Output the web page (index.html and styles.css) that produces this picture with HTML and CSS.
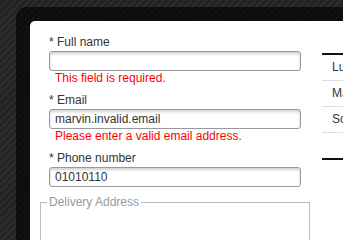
FILE: index.html
```html
<!DOCTYPE html>
<html lang="en">
<head>
<meta charset="utf-8">
<title>Order form</title>
<link rel="stylesheet" href="styles.css">
</head>
<body>
<div class="frame">
  <div class="panel">
    <form class="form">
      <div class="field">
        <label class="label" for="name">* Full name</label>
        <input class="input" id="name" type="text" value="">
        <div class="error">This field is required.</div>
      </div>
      <div class="field">
        <label class="label" for="email">* Email</label>
        <input class="input" id="email" type="text" value="marvin.invalid.email">
        <div class="error">Please enter a valid email address.</div>
      </div>
      <div class="field">
        <label class="label" for="phone">* Phone number</label>
        <input class="input" id="phone" type="text" value="01010110">
      </div>
      <fieldset class="group">
        <legend class="legend">Delivery Address</legend>
      </fieldset>
    </form>
    <div class="list">
      <div class="row">Lucy Brown</div>
      <div class="row">Mark Evans</div>
      <div class="row">Sophie Miller</div>
      <div class="row row-empty"></div>
    </div>
  </div>
</div>
</body>
</html>
```

FILE: styles.css
```css
html, body {
  margin: 0;
  width: 100%;
  height: 100%;
  overflow: hidden;
}

body {
  background: repeating-linear-gradient(135deg, #2d2d2d 0 2px, #232323 2px 5px);
  font-family: "Liberation Sans", Arial, sans-serif;
  font-size: 12px;
  color: #333;
}

.frame {
  box-sizing: border-box;
  height: calc(100% - 7px);
  margin: 7px 0 0 16px;
  padding: 14px 0 0 14px;
  background: rgba(0, 0, 0, 0.62);
  border-radius: 10px 0 0 0;
  overflow: hidden;
}

.panel {
  box-sizing: border-box;
  height: 100%;
  display: flex;
  align-items: flex-start;
  background: #fff;
  border-radius: 5px 0 0 0;
  padding: 14px 0 0 19px;
  overflow: hidden;
}

.form {
  width: 252px;
  flex: none;
  margin: 0;
}

.field {
  margin-bottom: 8px;
}

.label {
  display: block;
  line-height: 14px;
  margin-bottom: 2px;
  color: #333;
}

.input {
  display: block;
  box-sizing: border-box;
  width: 252px;
  height: 20px;
  margin: 0;
  padding: 0 5px;
  border: 1px solid #999;
  border-radius: 3px;
  background: #fff;
  box-shadow: inset 0 2px 3px rgba(0, 0, 0, 0.18);
  font-family: "Liberation Sans", Arial, sans-serif;
  font-size: 12px;
  color: #333;
  outline: none;
}

.error {
  color: #f00;
  line-height: 14px;
  padding-left: 6px;
}

.group {
  margin: 1px -9px 0;
  padding: 0 6px 40px;
  border: 1px solid #bbb;
  min-width: 0;
}

.legend {
  padding: 0 2px;
  line-height: 14px;
  color: #999;
}

.list {
  flex: none;
  width: 200px;
  margin: 18px 0 0 21px;
  border-top: 2px solid #111;
  border-bottom: 2px solid #111;
}

.row {
  height: 25px;
  line-height: 25px;
  padding-left: 10px;
  border-bottom: 1px solid #ddd;
  color: #333;
  white-space: nowrap;
}

.row-empty {
  border-bottom: none;
}
```
